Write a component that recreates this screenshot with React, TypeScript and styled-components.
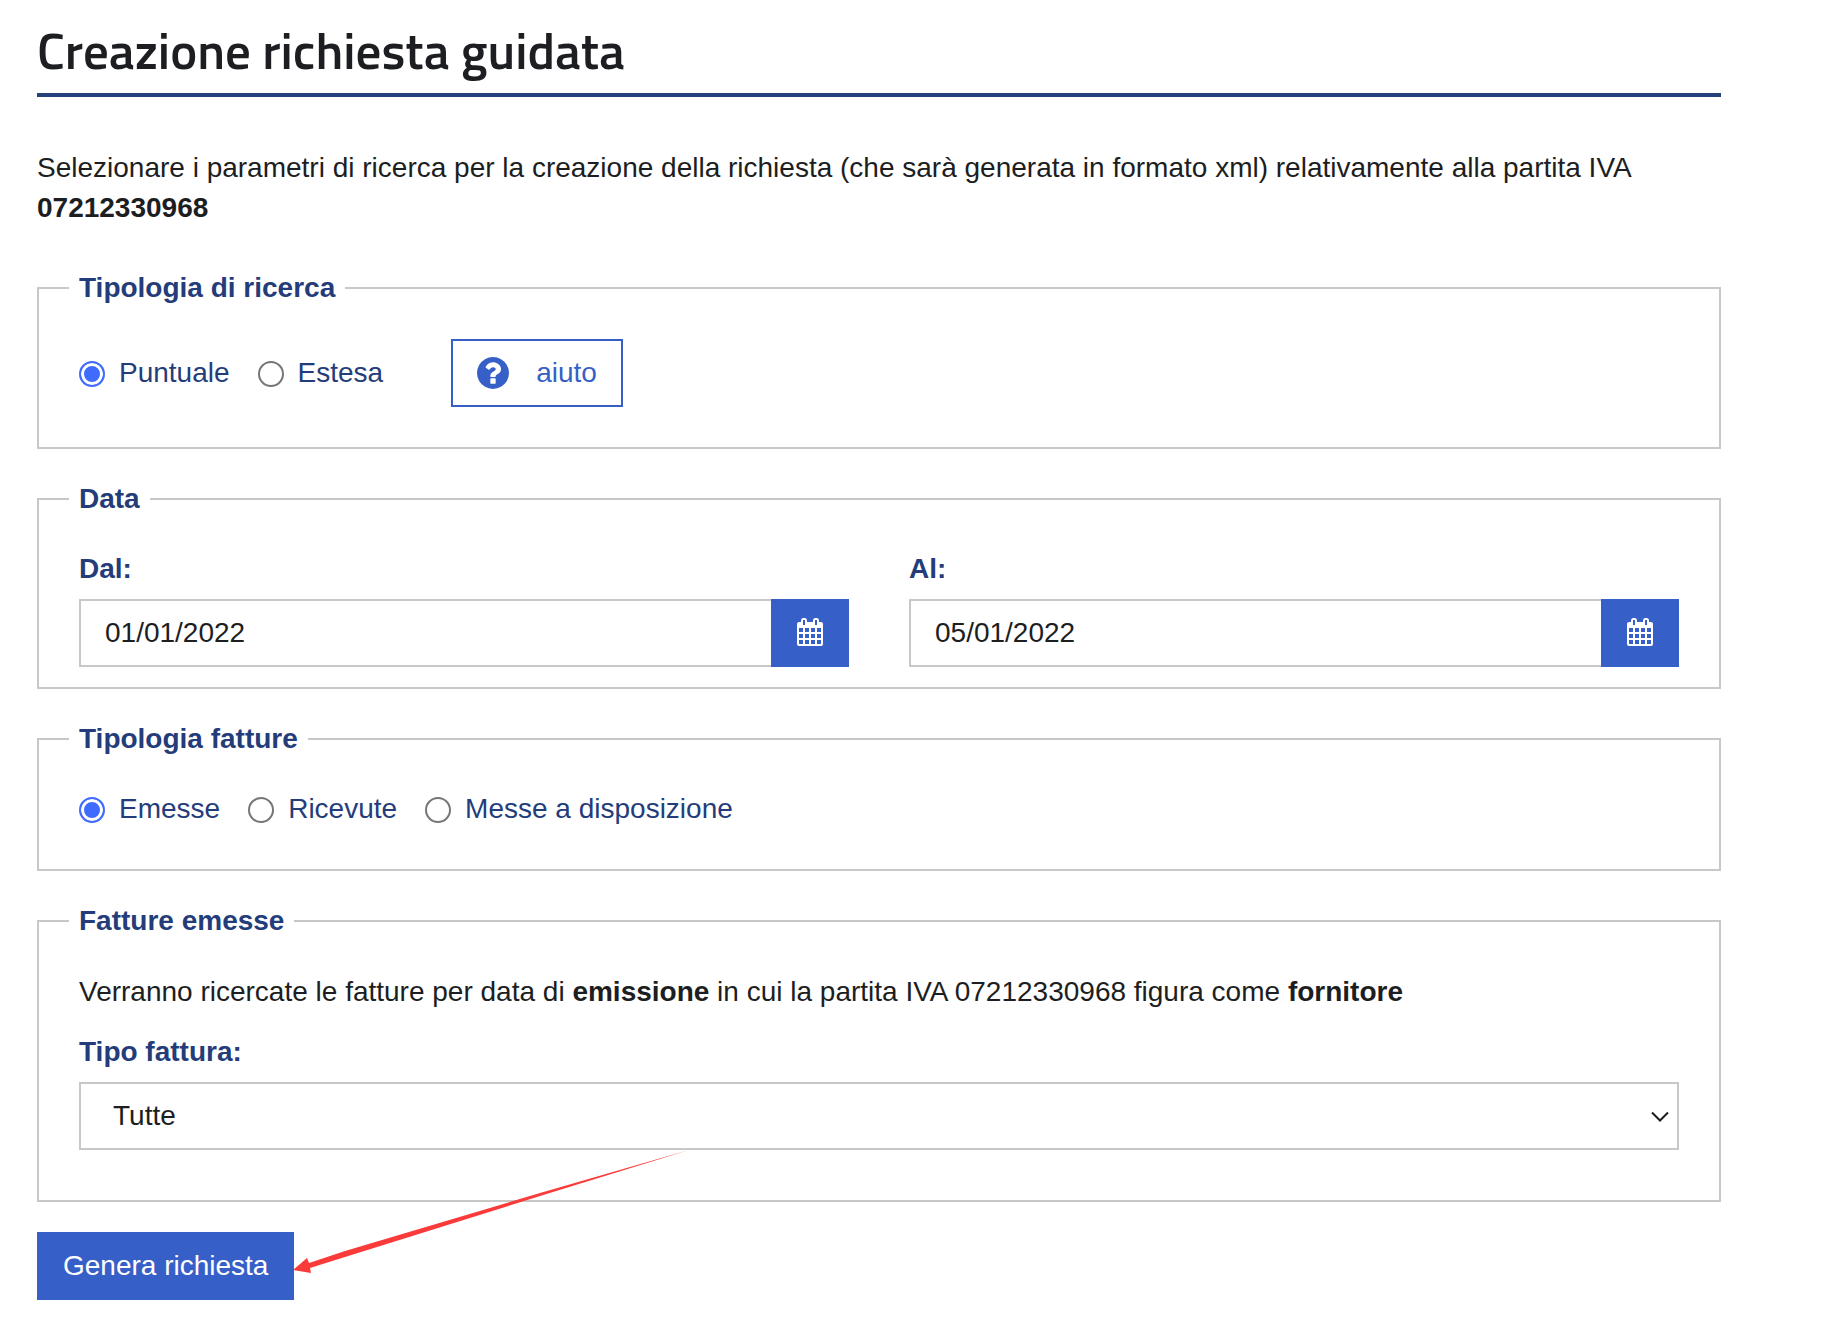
import React, { useState } from "react";
import styled, { createGlobalStyle } from "styled-components";

const color = {
  text: "#1c1e21",
  navy: "#243d7a",
  rule: "#24417d",
  blue: "#365fc8",
  accent: "#3f6bff",
  line: "#c8c8c8",
  radio: "#767676",
};

const GlobalStyle = createGlobalStyle`
  *, *::before, *::after { box-sizing: border-box; }
  body {
    margin: 0;
    background: #fff;
    color: ${color.text};
    font-family: "Liberation Sans", Arial, sans-serif;
    font-size: 28px;
    line-height: 40px;
  }
  input, select, button { font: inherit; color: inherit; border-radius: 0; }
`;

const Page = styled.main`
  padding: 20px 104px 28px 37px;
`;

const Title = styled.h1`
  margin: 0 0 51px;
  padding: 0 0 13px;
  border-bottom: 4px solid ${color.rule};
  font-family: "Titillium Web", "Noto Sans", sans-serif;
  font-size: 51px;
  font-weight: 600;
  line-height: 60px;
`;

const Text = styled.p`
  margin: 0;
`;

const Form = styled.form`
  display: flex;
  flex-direction: column;
  align-items: stretch;
  gap: 30px;
  margin-top: 40px;
`;

const Group = styled.fieldset<{ $top?: number; $bottom: number }>`
  min-width: 0;
  margin: 0;
  padding: ${(p) => p.$top ?? 30}px 40px ${(p) => p.$bottom}px;
  border: 2px solid ${color.line};
`;

const Legend = styled.legend`
  margin-left: -10px;
  padding: 0 10px;
  color: ${color.navy};
  font-weight: 700;
`;

const Choices = styled.div`
  display: flex;
  flex-wrap: wrap;
  align-items: center;
  gap: 28px;
`;

const Choice = styled.label`
  display: flex;
  align-items: center;
  gap: 14px;
  color: ${color.navy};
`;

const Radio = styled.input`
  appearance: none;
  width: 26px;
  height: 26px;
  margin: 2px 0 0;
  border: 2px solid ${color.radio};
  border-radius: 50%;
  background: #fff;

  &:checked {
    border-color: ${color.accent};
    background: ${color.accent};
    box-shadow: inset 0 0 0 3px #fff;
  }
`;

const HelpButton = styled.button`
  display: flex;
  align-items: center;
  gap: 27px;
  height: 68px;
  margin-left: 40px;
  padding: 0 24px;
  border: 2px solid ${color.blue};
  background: #fff;
  color: ${color.blue};
`;

const Columns = styled.div`
  display: grid;
  grid-template-columns: 1fr 1fr;
  gap: 60px;
`;

const Field = styled.div`
  display: flex;
  flex-direction: column;
  gap: 10px;
`;

const FieldLabel = styled.label`
  color: ${color.navy};
  font-weight: 700;
`;

const DateBox = styled.div`
  display: flex;
  height: 68px;
`;

const DateInput = styled.input`
  flex: 1;
  min-width: 0;
  padding: 0 24px;
  border: 2px solid ${color.line};
  border-right: 0;
  background: #fff;
`;

const CalendarButton = styled.button`
  display: flex;
  align-items: center;
  justify-content: center;
  width: 78px;
  padding: 0;
  border: 0;
  background: ${color.blue};
  color: #fff;
`;

const Stack = styled.div`
  display: flex;
  flex-direction: column;
  gap: 20px;
`;

const SelectBox = styled.div`
  display: grid;
  align-items: center;

  > * {
    grid-area: 1 / 1;
  }

  svg {
    justify-self: end;
    margin-right: 10px;
    pointer-events: none;
  }
`;

const Select = styled.select`
  appearance: none;
  width: 100%;
  height: 68px;
  padding: 0 32px;
  border: 2px solid ${color.line};
  background: #fff;
`;

const Actions = styled.div`
  position: relative;
  align-self: flex-start;
`;

const SubmitButton = styled.button`
  display: block;
  height: 68px;
  padding: 0 26px;
  border: 0;
  background: ${color.blue};
  color: #fff;
`;

const Arrow = styled.svg`
  position: absolute;
  left: 100%;
  bottom: 26px;
  margin-left: -2px;
  pointer-events: none;
`;

const QuestionIcon = () => (
  <svg width="32" height="32" viewBox="0 128 1536 1536" fill="currentColor" aria-hidden="true">
    <path d="M896 1376v-192q0-14-9-23t-23-9h-192q-14 0-23 9t-9 23v192q0 14 9 23t23 9h192q14 0 23-9t9-23zm256-672q0-88-55.5-163t-138.5-116-170-41q-243 0-371 213-15 24 8 42l132 100q7 6 19 6 16 0 25-12 53-68 86-92 34-24 86-24 48 0 85.5 26t37.5 59q0 38-20 61t-68 45q-63 28-115.5 86.5t-52.5 125.5v36q0 14 9 23t23 9h192q14 0 23-9t9-23q0-19 21.5-49.5t54.5-49.5q32-18 49-28.5t46-35 44.5-48 28-60.5 12.5-81zm384 192q0 209-103 385.5t-279.5 279.5-385.5 103-385.5-103-279.5-279.5-103-385.5 103-385.5 279.5-279.5 385.5-103 385.5 103 279.5 279.5 103 385.5z" />
  </svg>
);

const CalendarIcon = () => (
  <svg width="26" height="30" viewBox="0 0 26 30" fill="currentColor" aria-hidden="true">
    <path
      fillRule="evenodd"
      d="M2 4H4V2.5Q4 0 6 0H8Q10 0 10 2.500V4H16V2.500Q16 0 18 0H20Q22 0 22 2.500V4H24Q26 4 26 6V26Q26 28 24 28H2Q0 28 0 26V6Q0 4 2 4Z
        M6 2V7H8V2Z M18 2V7H20V2Z
        M2 10V14H6V10Z M8 10V14H12V10Z M14 10V14H18V10Z M20 10V14H24V10Z
        M2 16V20H6V16Z M8 16V20H12V16Z M14 16V20H18V16Z M20 16V20H24V16Z
        M2 22V26H6V22Z M8 22V26H12V22Z M14 22V26H18V22Z M20 22V26H24V22Z"
    />
  </svg>
);

type RadioGroupProps = {
  name: string;
  options: string[];
};

function RadioGroup({ name, options }: RadioGroupProps) {
  const [value, setValue] = useState(options[0]);
  return (
    <>
      {options.map((option) => (
        <Choice key={option}>
          <Radio
            type="radio"
            name={name}
            value={option}
            checked={value === option}
            onChange={() => setValue(option)}
          />
          {option}
        </Choice>
      ))}
    </>
  );
}

type DateFieldProps = {
  id: string;
  label: string;
  initial: string;
};

function DateField({ id, label, initial }: DateFieldProps) {
  return (
    <Field>
      <FieldLabel htmlFor={id}>{label}</FieldLabel>
      <DateBox>
        <DateInput id={id} type="text" defaultValue={initial} />
        <CalendarButton type="button" aria-label="Calendario">
          <CalendarIcon />
        </CalendarButton>
      </DateBox>
    </Field>
  );
}

export default function App() {
  return (
    <>
      <GlobalStyle />
      <Page>
        <Title>Creazione richiesta guidata</Title>
        <Text>
          Selezionare i parametri di ricerca per la creazione della richiesta (che sarà generata in
          formato xml) relativamente alla partita IVA <strong>07212330968</strong>
        </Text>
        <Form onSubmit={(event) => event.preventDefault()}>
          <Group $top={31} $bottom={40}>
            <Legend>Tipologia di ricerca</Legend>
            <Choices>
              <RadioGroup name="ricerca" options={["Puntuale", "Estesa"]} />
              <HelpButton type="button">
                <QuestionIcon />
                aiuto
              </HelpButton>
            </Choices>
          </Group>

          <Group $bottom={20}>
            <Legend>Data</Legend>
            <Columns>
              <DateField id="dal" label="Dal:" initial="01/01/2022" />
              <DateField id="al" label="Al:" initial="05/01/2022" />
            </Columns>
          </Group>

          <Group $bottom={40}>
            <Legend>Tipologia fatture</Legend>
            <Choices>
              <RadioGroup name="fatture" options={["Emesse", "Ricevute", "Messe a disposizione"]} />
            </Choices>
          </Group>

          <Group $top={31} $bottom={50}>
            <Legend>Fatture emesse</Legend>
            <Stack>
              <Text>
                Verranno ricercate le fatture per data di <strong>emissione</strong> in cui la
                partita IVA 07212330968 figura come <strong>fornitore</strong>
              </Text>
              <Field>
                <FieldLabel htmlFor="tipo">Tipo fattura:</FieldLabel>
                <SelectBox>
                  <Select id="tipo" defaultValue="tutte">
                    <option value="tutte">Tutte</option>
                  </Select>
                  <svg width="18" height="11" viewBox="0 0 18 11" fill="none" aria-hidden="true">
                    <path d="M1 1.5L9 9.5L17 1.5" stroke={color.text} strokeWidth="2" />
                  </svg>
                </SelectBox>
              </Field>
            </Stack>
          </Group>

          <Actions>
            <SubmitButton type="submit">Genera richiesta</SubmitButton>
            <Arrow width="400" height="126" viewBox="0 0 400 126" aria-hidden="true">
              <path d="M1 122L15 110L17 115L53 103L248 45L397 2L248 48L53 109L18 120L19 125Z" fill="#fb3a3a" />
            </Arrow>
          </Actions>
        </Form>
      </Page>
    </>
  );
}
